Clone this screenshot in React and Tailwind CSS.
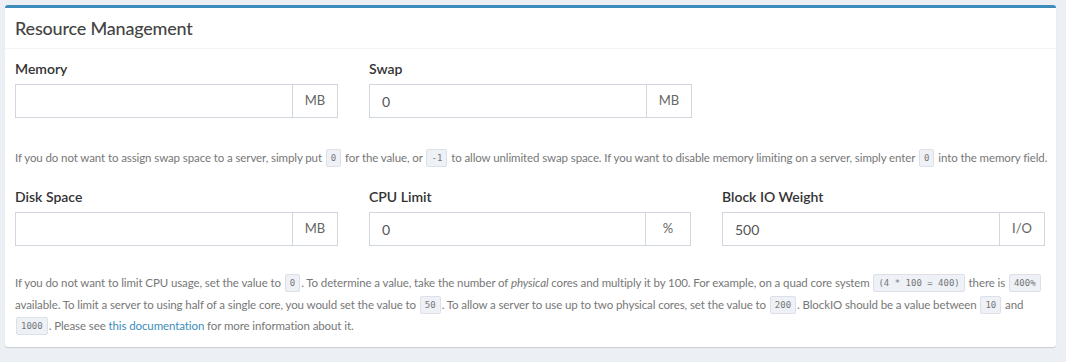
const Code = ({ children }) => (
    <code className="inline-block align-middle px-[4px] py-0 leading-[16px] text-[9px] tracking-normal text-[#777] bg-[#eef1f6] border border-[#dde1e7] rounded-[2px] font-['DejaVu_Sans_Mono',monospace] mx-[1px] -mt-[2px]">
        {children}
    </code>
);

const Field = ({ label, value, addon }) => (
    <div className="flex flex-col">
        <label className="text-[14px] leading-[20px] font-semibold text-[#333] mb-[5px]">{label}</label>
        <div className="flex h-[34px]">
            <input
                type="text"
                defaultValue={value}
                className="flex-1 min-w-0 h-[34px] border border-[#d2d6de] px-[12px] text-[14px] text-[#555] outline-none"
            />
            <span className="w-[45px] h-[34px] flex items-center justify-center border border-l-0 border-[#d2d6de] text-[13px] text-[#666] bg-white">
                {addon}
            </span>
        </div>
    </div>
);

const App = () => {
    return (
        <div className="min-h-[362px] bg-[#ecf0f5] p-[5px] pr-[10px] font-['Lato',sans-serif]">
            <div className="bg-white border-t-[3px] border-[#3c8dbc] rounded-[3px] shadow-[0_1px_1px_rgba(0,0,0,0.15)]">
                <div className="px-[10px] py-[10px] border-b border-[#f4f4f4]">
                    <h3 className="text-[18px] leading-[20px] text-[#444] font-medium tracking-[-0.2px]">Resource Management</h3>
                </div>
                <div className="p-[10px]">
                    <div className="grid gap-[31px]" style={{ gridTemplateColumns: '323px 323px' }}>
                        <Field label="Memory" value="" addon="MB" />
                        <Field label="Swap" value="0" addon="MB" />
                    </div>
                    <p className="mt-[29px] text-[11.5px] leading-[21px] tracking-[-0.1px] text-[#777] whitespace-nowrap">
                        If you do not want to assign swap space to a server, simply put <Code>0</Code> for the value, or <Code>-1</Code> to allow unlimited swap space. If you want to disable memory limiting on a server, simply enter <Code>0</Code> into the memory field.
                    </p>
                    <div className="grid gap-[31px] mt-[19px]" style={{ gridTemplateColumns: '323px 322px 323px' }}>
                        <Field label="Disk Space" value="" addon="MB" />
                        <Field label="CPU Limit" value="0" addon="%" />
                        <Field label="Block IO Weight" value="500" addon="I/O" />
                    </div>
                    <p className="mt-[26px] text-[11.5px] leading-[21.5px] tracking-[-0.1px] text-[#777] whitespace-nowrap">
                        If you do not want to limit CPU usage, set the value to <Code>0</Code>. To determine a value, take the number of <em>physical</em> cores and multiply it by 100. For example, on a quad core system <Code>(4 * 100 = 400)</Code> there is <Code>400%</Code>
                        <br />
                        available. To limit a server to using half of a single core, you would set the value to <Code>50</Code>. To allow a server to use up to two physical cores, set the value to <Code>200</Code>. BlockIO should be a value between <Code>10</Code> and
                        <br />
                        <Code>1000</Code>. Please see <a href="#" className="text-[#3c8dbc]">this documentation</a> for more information about it.
                    </p>
                </div>
            </div>
        </div>
    );
};

export default App;
